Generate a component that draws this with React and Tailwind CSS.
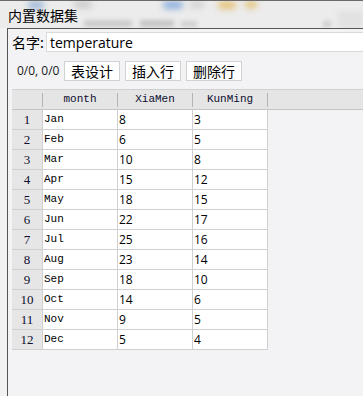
import React from "react";

const rows = [
  ["Jan", "8", "3"],
  ["Feb", "6", "5"],
  ["Mar", "10", "8"],
  ["Apr", "15", "12"],
  ["May", "18", "15"],
  ["Jun", "22", "17"],
  ["Jul", "25", "16"],
  ["Aug", "23", "14"],
  ["Sep", "18", "10"],
  ["Oct", "14", "6"],
  ["Nov", "9", "5"],
  ["Dec", "5", "4"],
];

const cjk = "font-['Microsoft_YaHei','Noto_Sans_CJK_SC',sans-serif]";
const mono = "font-['Liberation_Mono',monospace]";

function HeaderCell({ label, w }) {
  return (
    <div className={`flex items-center h-full ${w}`}>
      <div className={`flex-1 text-center text-[11px] text-[#0e0e30] ${mono}`}>{label}</div>
      <div className="w-[1px] h-[14px] bg-[#b4b4b4]" />
    </div>
  );
}

export default function App() {
  return (
    <div className="w-[363px] h-[396px] overflow-hidden bg-[#f2f2f2] flex flex-col">
      {/* titre, fond flou */}
      <div className="relative h-[28px] shrink-0 bg-[#ececec] overflow-hidden border-t border-[#6a6a6a]">
        <div className="absolute left-[28px] top-[0px] w-[16px] h-[8px] rounded bg-[#9fb8d8] blur-[3px]" />
        <div className="absolute left-[74px] top-[0px] w-[18px] h-[7px] rounded bg-[#c9c9c9] blur-[3px]" />
        <div className="absolute left-[163px] top-[0px] w-[20px] h-[8px] rounded bg-[#8fb1de] blur-[3px]" />
        <div className="absolute left-[190px] top-[0px] w-[14px] h-[7px] rounded bg-[#cfcfcf] blur-[3px]" />
        <div className="absolute left-[218px] top-[0px] w-[18px] h-[8px] rounded bg-[#e6c37a] blur-[3px]" />
        <div className="absolute left-[245px] top-[0px] w-[12px] h-[7px] rounded bg-[#e2c074] blur-[3px]" />
        <div className="absolute left-[84px] top-[19px] w-[48px] h-[7px] bg-[#cbcbcb] blur-[2px]" />
        <div className="absolute left-[140px] top-[19px] w-[34px] h-[7px] bg-[#c6c6c6] blur-[2px]" />
        <div className="absolute left-[181px] top-[20px] w-[16px] h-[6px] bg-[#cfcfcf] blur-[2px]" />
        <div className="absolute left-[323px] top-[20px] w-[8px] h-[6px] bg-[#cdcdcd] blur-[2px]" />
        <div className="absolute left-[338px] top-[10px] w-[25px] h-[18px] bg-[#e2e2e2] blur-[2px]" />
        <div className={`relative pl-[8px] pt-[6px] text-[14px] leading-[16px] text-black ${cjk}`}>内置数据集</div>
      </div>

      <div className="flex-1 ml-[7px] border-l border-t border-[#555555] bg-[#f3f3f5] pl-[4px] overflow-hidden">
        <div className="flex items-center h-[20px] mt-[3px]">
          <div className={`w-[34px] shrink-0 text-[14px] text-black ${cjk}`}>名字:</div>
          <div className="w-[340px] shrink-0 h-[20px] bg-white border border-[#dadada] pl-[3px] flex items-center text-[14px] text-black font-['Open_Sans',sans-serif]">
            temperature
          </div>
        </div>

        <div className="flex items-center h-[20px] mt-[9px]">
          <div className="w-[52px] pl-[5px] text-[12px] text-[#1a1a1a] font-['Open_Sans',sans-serif]">0/0, 0/0</div>
          <div className="flex gap-[5px]">
            {["表设计", "插入行", "删除行"].map((b) => (
              <div key={b} className={`w-[56px] h-[20px] bg-white border border-[#d2d2d2] flex items-center justify-center text-[14px] text-black ${cjk}`}>
                {b}
              </div>
            ))}
          </div>
        </div>

        <div className="mt-[8px] border-t border-[#d0d0d0]">
          <div className="flex h-[20px] bg-[#e5e5e5] border-b border-[#c4c4c4]">
            <HeaderCell label="" w="w-[31px]" />
            <HeaderCell label="month" w="w-[75px]" />
            <HeaderCell label="XiaMen" w="w-[75px]" />
            <HeaderCell label="KunMing" w="w-[75px]" />
          </div>
          <div className="w-[256px] border-r border-[#d0d0d0]">
            {rows.map((r, i) => (
              <div key={r[0]} className="flex h-[20px] border-b border-[#d0d0d0]">
                <div className="w-[31px] bg-[#e6e6e6] border-r border-[#d0d0d0] flex items-center justify-center text-[13px] text-[#0e0e30] font-['Liberation_Serif',serif]">
                  {i + 1}
                </div>
                <div className={`w-[75px] bg-white border-r border-[#d0d0d0] flex items-center pl-[1px] text-[11px] text-black ${mono}`}>
                  {r[0]}
                </div>
                <div className="w-[75px] bg-white border-r border-[#d0d0d0] flex items-center pl-[1px] text-[12px] text-black font-['Open_Sans',sans-serif]">
                  {r[1]}
                </div>
                <div className="w-[74px] bg-white flex items-center pl-[1px] text-[12px] text-black font-['Open_Sans',sans-serif]">
                  {r[2]}
                </div>
              </div>
            ))}
          </div>
        </div>
      </div>
    </div>
  );
}
